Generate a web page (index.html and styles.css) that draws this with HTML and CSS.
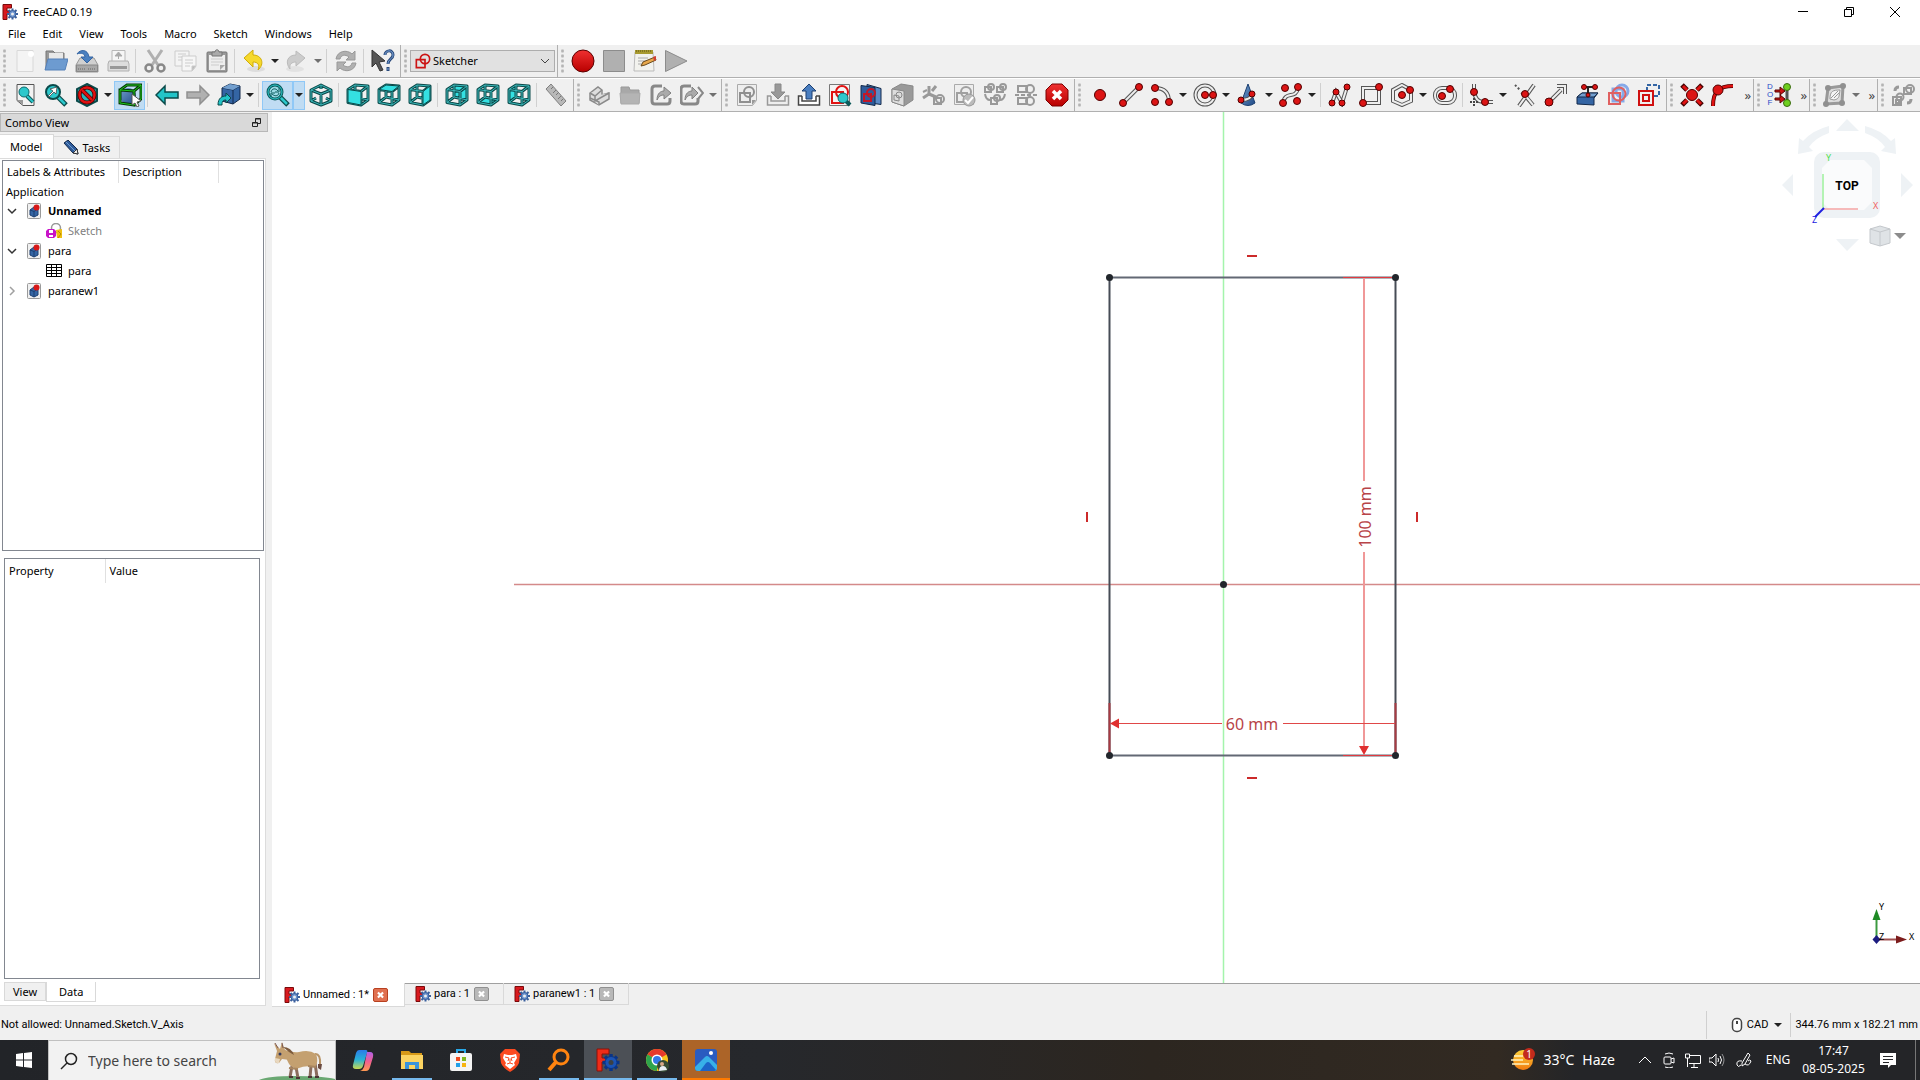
FILE: index.html
```html
<!DOCTYPE html>
<html lang="en">
<head>
    <meta charset="UTF-8">
    <meta name="viewport" content="width=device-width, initial-scale=1.0">
    <title>FreeCAD 0.19</title>
    <link rel="stylesheet" href="styles.css">
</head>
<body>
    <!-- shared shapes -->
    <svg class="defs" aria-hidden="true">
        <defs>
            <linearGradient id="gBlue" x1="0" y1="0" x2="1" y2="1"><stop offset="0" stop-color="#729fcf"/><stop offset="1" stop-color="#204a87"/></linearGradient>
            <linearGradient id="gRed" x1="0" y1="0" x2="0" y2="1"><stop offset="0" stop-color="#f03030"/><stop offset="1" stop-color="#b80000"/></linearGradient>
            <linearGradient id="gSun" x1="0" y1="0" x2="0" y2="1"><stop offset="0" stop-color="#ffd23a"/><stop offset="1" stop-color="#f07a10"/></linearGradient>
            <linearGradient id="gCopA" x1="0" y1="0" x2="0" y2="1"><stop offset="0" stop-color="#2a7be8"/><stop offset=".5" stop-color="#28b0d8"/><stop offset="1" stop-color="#c8d850"/></linearGradient>
            <linearGradient id="gCopB" x1="0" y1="0" x2="0" y2="1"><stop offset="0" stop-color="#b060e8"/><stop offset=".5" stop-color="#f06090"/><stop offset="1" stop-color="#ff9a50"/></linearGradient>
            <symbol id="logo" viewBox="0 0 16 16">
                <path d="M1 .5h8.500V4H5v3h3v3H5v5.500H1z" fill="#d81a1f" stroke="#7a0a0a"/>
                <path d="M10.500 4.500v11M5 10h11M6.500 6l8 8M14.500 6l-8 8" stroke="#3a5f9c" stroke-width="2"/>
                <circle cx="10.500" cy="10" r="3.500" fill="#6a92cc" stroke="#3a5f9c"/>
                <circle cx="10.500" cy="10" r="1.500" fill="#eee"/>
            </symbol>
            <symbol id="doc" viewBox="0 0 16 16">
                <rect x="1.500" y=".5" width="13" height="15" rx="1" fill="#f0f0f0" stroke="#9a9a9a"/>
                <path d="M4 7l4-3 4 2v6l-4 2-4-2z" fill="#3465a4" stroke="#1c3f70"/>
                <path d="M4 7l4 1.500L12 6M8 8.500V14" stroke="#1c3f70" fill="none"/>
                <circle cx="10.500" cy="4.500" r="3" fill="#d81818"/>
            </symbol>
            <symbol id="wire" viewBox="0 0 24 24">
                <g fill="none" stroke-linejoin="round">
                    <path class="teal-edge" d="M2 6.500l13 2V22L2 19.500zM2 6.500L9 2l13 1-7 5.500M22 3v14l-7 5M9 2v12l13 3M9 14l-7 5.500"/>
                    <path class="teal-core" d="M2 6.500l13 2V22L2 19.500zM2 6.500L9 2l13 1-7 5.500M22 3v14l-7 5M9 2v12l13 3M9 14l-7 5.500"/>
                </g>
            </symbol>
            <symbol id="sketch" viewBox="0 0 24 24">
                <g fill="none" stroke-width="2.500"><path d="M2 10h13v12H2z"/><circle cx="15" cy="9" r="7"/></g>
            </symbol>
            <symbol id="close" viewBox="0 0 14 14">
                <path d="M4 4l6 6M10 4l-6 6" stroke="#fff" stroke-width="2.500"/>
            </symbol>
        </defs>
    </svg>

    <header class="titlebar">
        <svg class="i16"><use href="#logo"/></svg>
        <span class="title">FreeCAD 0.19</span>
        <div class="window-buttons">
            <button aria-label="Minimize"><svg viewBox="0 0 12 12"><path d="M1 5.500h10"/></svg></button>
            <button aria-label="Restore"><svg viewBox="0 0 12 12"><path d="M1.500 3.500h7v7h-7zM3.500 3.500v-2h7v7h-2"/></svg></button>
            <button aria-label="Close"><svg viewBox="0 0 12 12"><path d="M1 1l10 10M11 1L1 11"/></svg></button>
        </div>
    </header>

    <nav class="menubar">
        <button>File</button><button>Edit</button><button>View</button><button>Tools</button><button>Macro</button><button>Sketch</button><button>Windows</button><button>Help</button>
    </nav>

    <div class="toolrow">
        <div class="toolbar">
            <i class="grip"></i>
            <button aria-label="New"><svg viewBox="0 0 24 24"><path d="M4 1.500h16v21H4z" fill="#f4f4f4" stroke="#d8d8d8"/><circle cx="18" cy="5" r="3" fill="#fff"/></svg></button>
            <button aria-label="Open"><svg viewBox="0 0 24 24"><path d="M2 20V2h7l2 2h9v6" fill="#999" stroke="#777"/><path d="M5 4h14v6H5z" fill="#e8e8e8"/><path d="M4 10h20l-3 11H1z" fill="#6d9bd0" stroke="#5580b8"/></svg></button>
            <button aria-label="Save"><svg viewBox="0 0 24 24"><path d="M5 9h14l4 7v7H1v-7z" fill="#d0d0d0" stroke="#999"/><path d="M1.500 16h21v6.500h-21z" fill="#a8a8a8" stroke="#888"/><path d="M3 20h8M13 20h8" stroke="#666" stroke-dasharray="1 1"/><path d="M2 5c3-5 11-5 12 3h4l-6 6-6-6h4c0-3-4-5-8-3z" fill="#4a80c0" stroke="#3465a4"/></svg></button>
            <button aria-label="Print"><svg viewBox="0 0 24 24"><path d="M6 1.500h13V14H6z" fill="#f6f6f6" stroke="#b8b8b8"/><path d="M12.500 10V6M9 7l3.500-4L16 7z" fill="#aaa" stroke="#aaa"/><path d="M3 12h19l1 3v7H2v-7z" fill="#ddd" stroke="#b0b0b0"/><path d="M4 17h17v3H4z" fill="#999"/></svg></button>
            <i class="sep"></i>
            <button aria-label="Cut"><svg viewBox="0 0 24 24" fill="none"><path d="M5 1l10 15M19 1L9 16" stroke="#b0b0b0" stroke-width="3"/><circle cx="6" cy="19" r="3.500" stroke="#888" stroke-width="2.500"/><circle cx="18" cy="19" r="3.500" stroke="#888" stroke-width="2.500"/></svg></button>
            <button aria-label="Copy"><svg viewBox="0 0 24 24" stroke="#ccc"><path d="M1 2h14v15H1z" fill="#f4f4f4"/><path d="M4 5h8M4 8h8M4 11h5"/><path d="M8 7h14v10l-4 5H8z" fill="#f6f6f6"/><path d="M11 11h8M11 14h8M11 17h5"/><path d="M18 22v-5h4z" fill="#bbb"/></svg></button>
            <button aria-label="Paste"><svg viewBox="0 0 24 24"><rect x="2" y="3" width="20" height="20" rx="1" fill="#999" stroke="#777"/><path d="M4 6h16v15H4z" fill="#eee"/><path d="M7 7V3h3c0-3 4-3 4 0h3v4z" fill="#aaa" stroke="#777"/><path d="M6 10h12M6 13h12M6 16h8" stroke="#ccc"/><path d="M15 21v-5h5z" fill="#aaa"/></svg></button>
            <i class="sep"></i>
            <button aria-label="Undo"><svg viewBox="0 0 24 24"><ellipse cx="14" cy="20" rx="9" ry="3" fill="#ddd"/><path d="M2 9l9-8v5c9 0 12 9 5 15 2-5 0-8-5-8v5z" fill="#f6d92c" stroke="#d0ac08"/></svg></button>
            <button class="drop" aria-label="Undo list"></button>
            <button aria-label="Redo"><svg viewBox="0 0 24 24"><ellipse cx="10" cy="20" rx="9" ry="3" fill="#e2e2e2"/><path d="M20 9l-9-7v4c-9 0-11 8-6 14-1-5 2-7 6-7v4z" fill="#ccc" stroke="#bbb"/></svg></button>
            <button class="drop off" aria-label="Redo list"></button>
            <i class="sep"></i>
            <button aria-label="Refresh"><svg viewBox="0 0 24 24" fill="#b0b0b0" stroke="#999"><path d="M2 10c1-8 11-10 16-5l3-3v9h-9l3-3c-4-3-8-2-9 2z"/><path d="M22 14c-1 8-11 10-16 5l-3 3v-9h9l-3 3c4 3 8 2 9-2z"/></svg></button>
            <i class="sep"></i>
            <button aria-label="What's this"><svg viewBox="0 0 24 24"><path d="M1 1l13 11-6 1 4 8-3 1-4-8-4 4z" fill="#555" stroke="#333"/><path d="M14 6c0-5 8-6 8 0 0 4-5 4-5 9M17 18v4" fill="none" stroke="#2a4a7c" stroke-width="3"/><path d="M14 6c0-5 8-6 8 0 0 4-5 4-5 9M17 19v2" fill="none" stroke="#7aa4d8"/></svg></button>
        </div>
        <div class="toolbar">
            <i class="grip"></i>
            <label class="workbench">
                <svg class="i16" stroke="#cc1414"><use href="#sketch"/></svg>
                <select aria-label="Workbench"><option>Sketcher</option></select>
                <svg class="chev" viewBox="0 0 10 6"><path d="M1 1l4 4 4-4" fill="none" stroke="#444"/></svg>
            </label>
        </div>
        <div class="toolbar last">
            <i class="grip"></i>
            <button aria-label="Record macro"><svg viewBox="0 0 24 24"><circle cx="12" cy="12" r="11" fill="url(#gRed)" stroke="#5a0000"/></svg></button>
            <button aria-label="Stop macro"><svg viewBox="0 0 24 24"><path d="M1.500 1.500h21v21h-21z" fill="#b0b0b0" stroke="#8c8c8c"/></svg></button>
            <button aria-label="Macros"><svg viewBox="0 0 24 24"><path d="M2 3h18l1 19H1z" fill="#f2f2ee" stroke="#bbb"/><path d="M2 1h18v4H2z" fill="#a89a30"/><path d="M3 2h16" stroke="#5a5010" stroke-dasharray="1 1"/><path d="M5 9h10M5 12h8M5 15h6" stroke="#aaa"/><path d="M8 17l2-4 12-5 1 3-11 5z" fill="#e8a84c" stroke="#6a4a1c"/><path d="M20 8l3-1v4l-2 1z" fill="#d04030"/></svg></button>
            <button aria-label="Execute macro"><svg viewBox="0 0 24 24"><path d="M1.500 1.500L23 12 1.500 22.500z" fill="#b0b0b0" stroke="#8c8c8c"/></svg></button>
        </div>
    </div>

    <div class="toolrow">
        <div class="toolbar">
            <i class="grip"></i>
            <button aria-label="Fit all"><svg viewBox="0 0 24 24"><path d="M4 1.500h17v21H10l-6-5z" fill="#f2f2f2" stroke="#555"/><path d="M4 17h6v5z" fill="#999"/><path d="M14 13l6 6" stroke="#0b5a5a" stroke-width="4"/><path d="M14 13l6 6" stroke="#2cc8cc" stroke-width="2"/><circle cx="11" cy="9" r="5" fill="#2cc8cc" stroke="#0b6a6c"/></svg></button>
            <button aria-label="Fit selection"><svg viewBox="0 0 24 24"><path d="M13 13l9 9" stroke="#0b4a4a" stroke-width="5"/><path d="M13 13l8 8" stroke="#2cc8cc" stroke-width="2.500"/><circle cx="9" cy="9" r="7" fill="#2cc8cc" stroke="#0b4a4a" stroke-width="2"/><path d="M4 13l5-5-3-2 7-2-1 7-2-2-5 5z" fill="#fff" stroke="#333" stroke-width=".7"/></svg></button>
            <button aria-label="Draw style"><svg viewBox="0 0 24 24" fill="none"><path d="M12 1l10 5v12l-10 5-10-5V6z" fill="#2ab4b8" stroke="#0b4a4a" stroke-width="2"/><circle cx="12" cy="12" r="7.500" stroke="#400" stroke-width="4"/><circle cx="12" cy="12" r="7.500" stroke="#e01212" stroke-width="2.500"/><path d="M7 7l10 10" stroke="#400" stroke-width="4"/><path d="M7 7l10 10" stroke="#e01212" stroke-width="2.500"/></svg></button>
            <button class="drop" aria-label="Draw style list"></button>
            <button class="on" aria-label="Bounding box"><svg viewBox="0 0 24 24"><circle cx="10" cy="13" r="8" fill="url(#gBlue)"/><path d="M2 7l14 1v14L2 20zM2 7l7-5h14l-7 6M23 2v14l-7 6" fill="none" stroke="#063806" stroke-width="3"/><path d="M2 7l14 1v14L2 20zM2 7l7-5h14l-7 6M23 2v14l-7 6" fill="none" stroke="#1ec81e"/><path d="M14 11l9 7-4 1 2 4-2 1-2-4-3 2z" fill="#fff" stroke="#555"/></svg></button>
            <i class="sep"></i>
            <button aria-label="Back"><svg viewBox="0 0 24 24"><path d="M1 12l9-9v6h13v6H10v6z" fill="#22c4c8" stroke="#0b4a4a" stroke-width="1.500"/></svg></button>
            <button aria-label="Forward"><svg viewBox="0 0 24 24"><path d="M23 12l-9-9v6H1v6h13v6z" fill="#b0b0b0" stroke="#909090" stroke-width="1.500"/></svg></button>
            <button aria-label="Go to linked object"><svg viewBox="0 0 24 24"><path d="M5 5l8-4 10 2v13l-7 5-11-3z" fill="#3465a4" stroke="#12294a"/><path d="M5 5l11 2 7-4M16 7v14" fill="none" stroke="#12294a"/><path d="M5 5l8-4 10 2-7 4z" fill="#729fcf"/><path d="M1 22c0-7 4-9 8-9v-3l5 5-5 5v-3c-3 0-4 1-4 5z" fill="#22c4c8" stroke="#0b4a4a"/></svg></button>
            <button class="drop" aria-label="Link list"></button>
            <i class="sep"></i>
            <button class="on" aria-label="Sync view"><svg viewBox="0 0 24 24" fill="none"><path d="M14 14l8 8" stroke="#0b4a4a" stroke-width="5"/><path d="M14 14l7 7" stroke="#2cc8cc" stroke-width="2.500"/><circle cx="9" cy="9" r="7" fill="#9cdce6" stroke="#0b5a5c" stroke-width="3"/><circle cx="9" cy="9" r="7" stroke="#2cc8cc"/><path d="M5 9c1-4 5-4 7-1M13 10c-1 4-5 3-7 1M13 5v4H9M5 14v-4h4" stroke="#0b5a5c"/></svg></button>
            <button class="drop on" aria-label="Sync view list"></button>
            <button aria-label="Isometric"><svg viewBox="0 0 24 24" fill="none" stroke-linejoin="round"><path class="teal-edge" d="M12 2l10 5v11l-10 4-10-4V7zM2 7l10 4 10-4M12 11v11M12 2v4M2 18l5-3M22 18l-5-3"/><path class="teal-core" d="M12 2l10 5v11l-10 4-10-4V7zM2 7l10 4 10-4M12 11v11M12 2v4M2 18l5-3M22 18l-5-3"/></svg></button>
            <i class="sep"></i>
            <button aria-label="Front"><svg viewBox="0 0 24 24"><use href="#wire"/><path class="face" d="M2 6.500l13 2V22L2 19.500z"/></svg></button>
            <button aria-label="Top"><svg viewBox="0 0 24 24"><use href="#wire"/><path class="face" d="M2 6.500L9 2l13 1-7 5.500z"/></svg></button>
            <button aria-label="Right"><svg viewBox="0 0 24 24"><use href="#wire"/><path class="face" d="M15 8.500L22 3v14l-7 5z"/></svg></button>
            <i class="sep"></i>
            <button aria-label="Rear"><svg viewBox="0 0 24 24"><path class="face" d="M9 2l13 1v14L9 14z"/><use href="#wire"/></svg></button>
            <button aria-label="Bottom"><svg viewBox="0 0 24 24"><path class="face" d="M2 19.500L9 14l13 3-7 5z"/><use href="#wire"/></svg></button>
            <button aria-label="Left"><svg viewBox="0 0 24 24"><path class="face" d="M2 6.500L9 2v12l-7 5.500z"/><use href="#wire"/></svg></button>
            <i class="sep"></i>
            <button aria-label="Measure"><svg viewBox="0 0 24 24"><path d="M2 6l5-5 15 17-5 5z" fill="#b8b8b8" stroke="#808080"/><path d="M9 4L7 6M12 7l-3 3M14 10l-2 2M17 13l-3 3M19 16l-2 2" stroke="#777"/></svg></button>
        </div>
        <div class="toolbar">
            <i class="grip"></i>
            <button aria-label="Create part"><svg viewBox="0 0 24 24" fill="#ddd" stroke="#8a8a8a" stroke-width="1.500"><path d="M3 10l8-6 4 3v5l7-2v6l-10 6-9-5z"/><path d="M3 10l5 3 7-6M8 13v5l14-8M3 15l9 4v3"/></svg></button>
            <button aria-label="Create group"><svg viewBox="0 0 24 24"><path d="M3 20V4h8l1 3h9v13z" fill="#a8a8a8" stroke="#999"/><path d="M2 10h20l-1 11H3z" fill="#b4b4b4" stroke="#aaa"/></svg></button>
            <button aria-label="Make link"><svg viewBox="0 0 24 24" fill="none"><path d="M13 3H6q-3 0-3 3v12q0 3 3 3h12q3 0 3-3v-3" stroke="#888" stroke-width="3"/><path d="M8 17c0-7 4-9 7-9V4l7 6-7 6v-4c-3 0-5 1-7 5z" fill="#aaa" stroke="#808080"/></svg></button>
            <button aria-label="Make sub-link"><svg viewBox="0 0 24 24" fill="none"><path d="M11 3H4Q1 3 1 6v12q0 3 3 3h11q3 0 3-3v-3" stroke="#888" stroke-width="3"/><path d="M5 17c0-7 4-9 7-9V4l6 6-6 6v-4c-3 0-5 1-7 5z" fill="#aaa" stroke="#808080"/><path d="M18 4l5 6-5 6" stroke="#888" stroke-width="2"/></svg></button>
            <button class="drop off" aria-label="Link actions"></button>
        </div>
        <div class="toolbar">
            <i class="grip"></i>
            <button aria-label="Create sketch"><svg viewBox="0 0 24 24"><path d="M2.500 1.500h19v16l-4 5h-15z" fill="#eee" stroke="#aaa"/><g fill="none" stroke="#909090" stroke-width="2"><path d="M5 10h10v9H5z"/><circle cx="14" cy="9" r="5"/></g><path d="M17 22v-5h4z" fill="#999"/></svg></button>
            <button aria-label="Edit sketch"><svg viewBox="0 0 24 24"><path d="M5 13H1.500v9h21v-9H19M5 13v5h14v-5" fill="#eee" stroke="#999" stroke-width="1.500"/><path d="M9 1h6v8h4l-7 7-7-7h4z" fill="#999" stroke="#888"/></svg></button>
            <button aria-label="Leave sketch"><svg viewBox="0 0 24 24"><path d="M5 13H1.500v9h21v-9H19M5 13v5h14v-5" fill="#fff" stroke="#444" stroke-width="1.500"/><path d="M9 16h6V8h4l-7-7-7 7h4z" fill="#4a7ec0" stroke="#1c3f70"/></svg></button>
            <button aria-label="View sketch"><svg viewBox="0 0 24 24"><path d="M1.500 1.500h20v21h-20z" fill="#f4f4f4" stroke="#777"/><g fill="none" stroke="#e01212" stroke-width="2"><path d="M4 9h11v11H4z"/><circle cx="14" cy="9" r="6"/></g><path d="M17 17l5 5" stroke="#0b5a5a" stroke-width="4"/><circle cx="15" cy="15" r="5" fill="#2cc8cc" stroke="#0b6a6c"/></svg></button>
            <button aria-label="View section"><svg viewBox="0 0 24 24"><path d="M8 1.500l14 4v16l-14-2z" fill="#5b8ac6" stroke="#12294a"/><path d="M2 2.500l14 2v18L2 20z" fill="#2f5c9c" stroke="#12294a"/><g fill="none" stroke="#c01828" stroke-width="2"><path d="M5 11h7v7H5z"/><circle cx="12" cy="10" r="4"/></g></svg></button>
            <button aria-label="Map sketch"><svg viewBox="0 0 24 24" stroke="#888"><path d="M2 6l9-5 12 2v14l-9 6-12-4z" fill="#999"/><path d="M2 6l12 2v15L2 19z" fill="#ddd"/><g fill="none"><path d="M4 12l5 1v5l-5-1z"/><circle cx="9" cy="12" r="3"/></g></svg></button>
            <button aria-label="Reorient sketch"><svg viewBox="0 0 24 24" fill="none" stroke="#999" stroke-width="3"><path d="M8 3v8l-6 4M8 11l7 3M11 8l4-5"/><path d="M2 9l4-2" stroke-width="2"/><path d="M13 15h7v6h-7z" stroke-width="2"/><circle cx="19" cy="16" r="4" stroke-width="2"/></svg></button>
            <button aria-label="Validate sketch"><svg viewBox="0 0 24 24"><path d="M2.500 1.500h19v20h-19z" fill="#eee" stroke="#aaa"/><g fill="none" stroke="#a0a0a0" stroke-width="2"><path d="M5 10h10v9H5z"/><circle cx="14" cy="9" r="5"/></g><circle cx="17" cy="17" r="6" fill="#bbb" stroke="#999"/><path d="M13 17l3 3 5-6" fill="none" stroke="#fff" stroke-width="2"/></svg></button>
            <button aria-label="Merge sketches"><svg viewBox="0 0 24 24" fill="none" stroke="#999" stroke-width="2"><path d="M2 4h6v5H2zM14 4h6v5h-6zM8 15h6v6H8z"/><circle cx="8" cy="4" r="3"/><circle cx="20" cy="4" r="3"/><circle cx="14" cy="15" r="3"/><path d="M2 11q1 6 5 6M22 11q-1 6-5 6"/></svg></button>
            <button aria-label="Mirror sketch"><svg viewBox="0 0 24 24" fill="none" stroke="#999" stroke-width="2"><path d="M4 3h9v6H4zM4 15h9v6H4z"/><circle cx="16" cy="6" r="4"/><circle cx="16" cy="18" r="4"/><path d="M1 12h22" stroke-dasharray="4 2"/></svg></button>
            <button aria-label="Stop operation"><svg viewBox="0 0 24 24"><path d="M7 1h10l6 6v10l-6 6H7l-6-6V7z" fill="url(#gRed)" stroke="#7a0000"/><path d="M8 8l8 8M16 8l-8 8" stroke="#fff" stroke-width="3.500"/></svg></button>
        </div>
        <div class="toolbar">
            <i class="grip"></i>
            <button aria-label="Point"><svg viewBox="0 0 24 24"><circle class="dot" cx="12" cy="12" r="5.500"/></svg></button>
            <button aria-label="Line"><svg viewBox="0 0 24 24" fill="none"><path class="tube" d="M4 20L20 4"/><path class="hollow" d="M4 20L20 4"/><circle class="dot" cx="4" cy="20" r="3.500"/><circle class="dot" cx="20" cy="4" r="3.500"/></svg></button>
            <button aria-label="Arc"><svg viewBox="0 0 24 24" fill="none"><path class="tube" d="M5 5q14 0 14 14"/><path class="hollow" d="M5 5q14 0 14 14"/><circle class="dot" cx="5" cy="5" r="3.500"/><circle class="dot" cx="5" cy="19" r="3.500"/><circle class="dot" cx="19" cy="19" r="3.500"/></svg></button>
            <button class="drop" aria-label="Arc list"></button>
            <button aria-label="Circle"><svg viewBox="0 0 24 24" fill="none"><circle class="tube" cx="12" cy="12" r="9.500"/><circle class="hollow" cx="12" cy="12" r="9.500"/><circle class="dot" cx="12" cy="12" r="3.500"/><circle class="dot" cx="20" cy="12" r="3.500"/></svg></button>
            <button class="drop" aria-label="Circle list"></button>
            <button aria-label="Conic"><svg viewBox="0 0 24 24" fill="none"><path d="M12 1l7 19q-7 5-14 0z" fill="url(#gBlue)" stroke="#1c3f70"/><path class="tube" d="M5 17q10 0 11-6"/><path class="hollow" d="M5 17q10 0 11-6"/><circle class="dot" cx="5" cy="17" r="3"/><circle class="dot" cx="16" cy="11" r="3"/></svg></button>
            <button class="drop" aria-label="Conic list"></button>
            <button aria-label="B-spline"><svg viewBox="0 0 24 24" fill="none"><path class="tube" d="M4 20c2-13 13-3 15-15"/><path class="hollow" d="M4 20c2-13 13-3 15-15"/><circle class="dot" cx="4" cy="20" r="3.500"/><circle class="dot" cx="6" cy="5" r="3.500"/><circle class="dot" cx="19" cy="4" r="3.500"/><circle class="dot" cx="18" cy="18" r="3.500"/></svg></button>
            <button class="drop" aria-label="B-spline list"></button>
            <i class="sep"></i>
            <button aria-label="Polyline"><svg viewBox="0 0 24 24" fill="none"><path class="tube" d="M4 20l4-11 6 11 5-16"/><path class="hollow" d="M4 20l4-11 6 11 5-16"/><circle class="dot" cx="4" cy="20" r="3"/><circle class="dot" cx="8" cy="9" r="3"/><circle class="dot" cx="14" cy="20" r="3"/><circle class="dot" cx="19" cy="4" r="3"/></svg></button>
            <button aria-label="Rectangle"><svg viewBox="0 0 24 24" fill="none"><path class="tube" d="M4 5h16v15H4z"/><path class="hollow" d="M4 5h16v15H4z"/><circle class="dot" cx="4" cy="20" r="3.500"/><circle class="dot" cx="20" cy="4" r="3.500"/></svg></button>
            <button aria-label="Polygon"><svg viewBox="0 0 24 24" fill="none"><path class="tube" d="M12 2l9 5v11l-9 4-9-4V7z"/><path class="hollow" d="M12 2l9 5v11l-9 4-9-4V7z"/><circle class="dot" cx="12" cy="12" r="3.500"/><circle class="dot" cx="20" cy="7" r="3.500"/></svg></button>
            <button class="drop" aria-label="Polygon list"></button>
            <button aria-label="Slot"><svg viewBox="0 0 24 24" fill="none"><rect class="tube" x="2" y="5" width="20" height="15" rx="7"/><rect class="hollow" x="2" y="5" width="20" height="15" rx="7"/><circle class="dot" cx="9" cy="13" r="3.500"/><circle class="dot" cx="17" cy="6" r="3.500"/></svg></button>
            <i class="sep"></i>
            <button aria-label="Fillet"><svg viewBox="0 0 24 24" fill="none"><path class="tube" d="M4 1v8q2 10 9 10h10"/><path class="hollow" d="M4 1v8q2 10 9 10h10"/><path d="M4 15v8M0 19h8" stroke="#444" stroke-width="2" stroke-dasharray="2 1"/><circle class="dot" cx="4" cy="9" r="3.500"/><circle class="dot" cx="15" cy="19" r="3.500"/></svg></button>
            <button class="drop" aria-label="Fillet list"></button>
            <button aria-label="Trim"><svg viewBox="0 0 24 24" fill="none"><path class="tube" d="M6 23L21 2M9 9l11 13"/><path d="M2 2l5 5" stroke="#555" stroke-width="2" stroke-dasharray="2 2"/><path class="hollow" d="M6 23L21 2M11 11l9 11"/><circle class="dot" cx="12" cy="11" r="3.500"/></svg></button>
            <button aria-label="Extend"><svg viewBox="0 0 24 24" fill="none"><path class="tube" d="M5 19L17 7M13 3h8v8"/><path class="hollow" d="M5 19L17 7M13 3h8v8"/><circle class="dot" cx="5" cy="19" r="4"/></svg></button>
            <button aria-label="External geometry"><svg viewBox="0 0 24 24"><path d="M2 14l5-4h16l-4 5v7l-17-1z" fill="#3465a4" stroke="#12294a"/><path d="M2 14l5-4h16l-4 4z" fill="#729fcf" stroke="#12294a"/><path d="M9 4h10M13 4v8" stroke="#222" stroke-width="2"/><circle class="dot" cx="9" cy="4" r="2.500"/><circle class="dot" cx="20" cy="4" r="2.500"/><circle class="dot" cx="13" cy="12" r="2"/></svg></button>
            <button aria-label="Carbon copy"><svg viewBox="0 0 24 24" fill="none"><g stroke="#85a9e8" stroke-width="3"><path d="M7 6h10v12H7z"/><circle cx="16" cy="8" r="6"/></g><g stroke="#e06060" stroke-width="2"><path d="M3 10h11v11H3z"/><circle cx="13" cy="11" r="6.500"/></g></svg></button>
            <button aria-label="Toggle construction"><svg viewBox="0 0 24 24" fill="none"><path d="M10 8V2h12v11h-6" stroke="#3465a4" stroke-width="2" stroke-dasharray="4 2"/><path d="M2 8h14v14H2zM6 12h6v6H6z" stroke="#d01010" stroke-width="2"/></svg></button>
        </div>
        <div class="toolbar">
            <i class="grip"></i>
            <button aria-label="Coincident"><svg viewBox="0 0 24 24"><path d="M2 2l5 5M22 2l-5 5M2 22l5-5M22 22l-5-5" stroke="#400" stroke-width="5"/><path d="M3 3l4 4M21 3l-4 4M3 21l4-4M21 21l-4-4" stroke="#e01212" stroke-width="3"/><circle class="dot" cx="12" cy="12" r="5.500"/></svg></button>
            <button aria-label="Point on object"><svg viewBox="0 0 24 24" fill="none"><path d="M2 23C2 8 8 3 22 3" stroke="#500" stroke-width="4"/><path d="M2 23C2 8 8 3 22 3" stroke="#e01212" stroke-width="2.500"/><circle class="dot" cx="7" cy="7" r="5"/></svg></button>
            <button class="more" aria-label="More constraints">»</button>
        </div>
        <div class="toolbar">
            <i class="grip"></i>
            <button aria-label="Select DoF"><span class="dof"><span>D</span><span>O</span><span>F</span></span><svg class="dof-icon" viewBox="7 0 17 24"><path d="M20 4v16" stroke="#555" stroke-width="3"/><path d="M8 7h5V4l5 4-5 4V9H8zM8 15h5v-3l5 4-5 4v-3H8z" fill="#d01414" stroke="#500"/><circle cx="20" cy="4" r="3.500" fill="#6fcf1f" stroke="#3a6a10"/><circle cx="20" cy="20" r="3.500" fill="#6fcf1f" stroke="#3a6a10"/></svg></button>
            <button class="more" aria-label="More tools">»</button>
        </div>
        <div class="toolbar">
            <i class="grip"></i>
            <button aria-label="Show B-spline info"><svg viewBox="0 0 24 24"><path d="M5 5l15-2-1 17-16 1z" fill="#ddd" stroke="#999" stroke-width="3"/><path d="M7 16c0-8 3-9 10-9-1 5 0 9-6 10z" fill="#f4f4f4" stroke="#999"/><path d="M8 15l7-7M11 15l5-5" stroke="#999"/><g fill="#909090"><circle cx="5" cy="5" r="3"/><circle cx="20" cy="3" r="3"/><circle cx="19" cy="20" r="3"/><circle cx="3" cy="21" r="3"/></g></svg></button>
            <button class="drop off" aria-label="B-spline info list"></button>
            <button class="more" aria-label="More B-spline tools">»</button>
        </div>
        <div class="toolbar last">
            <i class="grip"></i>
            <button aria-label="Switch virtual space"><svg viewBox="0 0 24 24" fill="none" stroke="#999" stroke-width="2"><path d="M2 14h8v8H2zM5 17h3v3H5zM13 5h7v6h-7z"/><circle cx="9" cy="14" r="3.500"/><circle cx="19" cy="6" r="4"/><path d="M4 8q0-4 4-4M20 16q0 4-4 4" stroke-width="3"/></svg></button>
        </div>
    </div>

    <main class="workspace">
        <aside class="dock">
            <div class="dock-title"><span>Combo View</span><button aria-label="Float"><svg viewBox="0 0 9 9"><path d="M.5 4.500h5v4h-5zM3.500 4V.5h5v5H6M.5 5h5M3.500 1h5" fill="none" stroke="#222"/></svg></button></div>
            <div class="tabs top-tabs">
                <button class="active">Model</button>
                <button><svg class="i16" viewBox="0 0 16 16"><path d="M1 3l4-3 9 9 1 5-5-1z" fill="#2f5c9c" stroke="#12294a"/><path d="M3 2l9 9" stroke="#729fcf"/><path d="M10 13l4-4 1 5z" fill="#eee" stroke="#333"/></svg>Tasks</button>
            </div>
            <div class="dock-page">
                <div class="tree-frame">
                    <table class="tree">
                        <thead><tr><th>Labels &amp; Attributes</th><th>Description</th><th></th></tr></thead>
                        <tbody>
                            <tr class="root"><td colspan="3">Application</td></tr>
                            <tr><td colspan="3"><div class="node"><svg class="fold" viewBox="0 0 10 10"><path d="M1 3l4 4 4-4"/></svg><svg class="i16"><use href="#doc"/></svg><b>Unnamed</b></div></td></tr>
                            <tr><td colspan="3"><div class="node child off"><svg class="i16" viewBox="0 0 16 16"><circle cx="10" cy="5" r="4.500" fill="none" stroke="#999" stroke-width="1.500"/><path d="M10 7l6-1v9h-5z" fill="#f0c010"/><path d="M12 8l3 3-3 4" fill="none" stroke="#b88c00"/><path d="M2 6h6l2 2v5l-2 2H2l-2-2V8z" fill="#c814c8"/><path d="M3 7h4v3H3zM3 12h4v2H3z" fill="#fff"/></svg>Sketch</div></td></tr>
                            <tr><td colspan="3"><div class="node"><svg class="fold" viewBox="0 0 10 10"><path d="M1 3l4 4 4-4"/></svg><svg class="i16"><use href="#doc"/></svg>para</div></td></tr>
                            <tr><td colspan="3"><div class="node child"><svg class="i16" viewBox="0 0 16 16"><path d="M.5 1.500h15v12H.5zM.5 4.500h15M.5 7.500h15M.5 10.500h15M5.500 1v12M10.500 1v12" fill="#fff" stroke="#000"/></svg>para</div></td></tr>
                            <tr><td colspan="3"><div class="node"><svg class="fold shut" viewBox="0 0 10 10"><path d="M3 1l4 4-4 4"/></svg><svg class="i16"><use href="#doc"/></svg>paranew1</div></td></tr>
                        </tbody>
                    </table>
                </div>
                <div class="prop-frame">
                    <table class="props"><thead><tr><th>Property</th><th>Value</th></tr></thead></table>
                </div>
                <div class="tabs bottom-tabs">
                    <button>View</button>
                    <button class="active">Data</button>
                </div>
            </div>
        </aside>

        <section class="mdi">
            <div class="viewport">
                <svg class="scene" viewBox="0 0 1648 871">
                    <path d="M242 472.500h1406" stroke="#d48a8a" stroke-width="1.500"/>
                    <path d="M951.500 0v871" stroke="#a4f4ac" stroke-width="1.500"/>
                    <g stroke-width="2">
                        <path d="M837.500 165.500h286M837.500 643.500h286" stroke="#626874"/>
                        <path d="M837.500 165.500v478M1123.500 165.500v478" stroke="#474c56"/>
                        <path d="M837.500 591v52M1123.500 591v52" stroke="#a83a42"/>
                    </g>
                    <path d="M1071 165.500h52M1071 643.500h52" stroke="#e03a40"/>
                    <path d="M1092 166v203M1092 440v196" stroke="#f09898" stroke-width="2"/>
                    <path d="M846 611.500h104M1011 611.500h112" stroke="#e04848"/>
                    <path d="M838 611.500l9-5v10zM1092 643l-5-9h10z" fill="#e03030"/>
                    <g fill="#22262c">
                        <circle cx="837.500" cy="165.500" r="3.500"/><circle cx="1123.500" cy="165.500" r="3.500"/>
                        <circle cx="837.500" cy="643.500" r="3.500"/><circle cx="1123.500" cy="643.500" r="3.500"/>
                        <circle cx="951.500" cy="472.500" r="3.500"/>
                    </g>
                    <path d="M975 144h10M975 666h10M815 400v10M1145 400v10" stroke="#cc2a2a" stroke-width="2"/>
                    <text class="dim" x="980" y="618">60 mm</text>
                    <text class="dim" transform="translate(1099 405) rotate(-90)">100 mm</text>
                </svg>

                <svg class="navcube" viewBox="0 0 160 148">
                    <g fill="#eef2f5">
                        <path d="M76 19h23L87 7zM76 127h23l-12 12zM22 73l11-11v22zM153 73l-12-12v24z"/>
                        <path d="M69 14v7q-14 5-20 14l4 4-15 3 1-16 4 3q10-11 26-15zM105 14v7q14 5 20 14l-4 4 15 3-1-16-4 3q-10-11-26-15z"/>
                        <rect x="54" y="40" width="66" height="66" rx="10"/>
                    </g>
                    <path d="M62 56l8-8h34l8 8v34l-8 8H70l-8-8z" fill="#fafbfc"/>
                    <path d="M63 62v35" stroke="#9cf09c" stroke-width="1.500"/>
                    <path d="M63 97h35" stroke="#f4a4a4" stroke-width="1.500"/>
                    <path d="M64 96l-9 9" stroke="#2020e0" stroke-width="2"/>
                    <text class="face-label" x="87" y="78">TOP</text>
                    <text class="axis" x="66" y="49" fill="#50e050">Y</text>
                    <text class="axis" x="113" y="97" fill="#f06060">X</text>
                    <text class="axis" x="52" y="111" fill="#2020e0">Z</text>
                    <path d="M110 117l10-3 10 3v14l-10 3-10-3z" fill="#dfe3e6" stroke="#c4c8cc"/>
                    <path d="M110 117l10 3 10-3M120 120v14" fill="none" stroke="#c4c8cc"/>
                    <path d="M134 121h12l-6 6z" fill="#8c8c8c"/>
                </svg>

                <svg class="axes" viewBox="0 0 80 70">
                    <path d="M36.500 49V27" stroke="#3c9a40" stroke-width="2"/>
                    <path d="M36.500 19l4 11h-8z" fill="#1e8a24"/>
                    <path d="M37 49.500h22" stroke="#a05050" stroke-width="2"/>
                    <path d="M67 49.500l-11-4v8z" fill="#7c1c1c"/>
                    <path d="M36.500 45l4 4.500-4 4.500-4-4.500z" fill="#1c1c80"/>
                    <text class="axis" x="39" y="20">Y</text>
                    <text class="axis" x="69" y="50">X</text>
                    <text class="axis" x="39" y="50">Z</text>
                </svg>
            </div>
            <div class="mdi-tabs">
                <div class="mdi-tab active"><svg class="i16"><use href="#logo"/></svg><span>Unnamed : 1*</span><button aria-label="Close Unnamed"><svg viewBox="0 0 14 14"><use href="#close"/></svg></button></div>
                <div class="mdi-tab"><svg class="i16"><use href="#logo"/></svg><span>para : 1</span><button aria-label="Close para"><svg viewBox="0 0 14 14"><use href="#close"/></svg></button></div>
                <div class="mdi-tab"><svg class="i16"><use href="#logo"/></svg><span>paranew1 : 1</span><button aria-label="Close paranew1"><svg viewBox="0 0 14 14"><use href="#close"/></svg></button></div>
            </div>
        </section>
    </main>

    <footer class="statusbar">
        <span class="message">Not allowed: Unnamed.Sketch.V_Axis</span>
        <button class="navstyle"><svg viewBox="0 0 12 16"><rect x="1.500" y="1.500" width="9" height="13" rx="4" fill="#fff" stroke="#444" stroke-width="1.500"/><path d="M6 4v3" stroke="#444" stroke-width="2"/></svg>CAD<i class="tri"></i></button>
        <span class="size">344.76 mm x 182.21 mm</span>
    </footer>

    <div class="taskbar">
        <button class="start" aria-label="Start"><svg viewBox="0 0 16 16" fill="#fff"><path d="M0 2l7-1v6.500H0zM8 1l8-1v7.500H8zM0 8.500h7V15l-7-1zM8 8.500h8V16l-8-1z"/></svg></button>
        <div class="search">
            <svg class="lens" viewBox="0 0 18 18"><circle cx="11" cy="7" r="5.500"/><path d="M7 11l-6 6"/></svg>
            <input type="text" placeholder="Type here to search" aria-label="Type here to search">
            <svg class="donkey" viewBox="0 0 80 40">
                <path d="M2 40q8-5 38-5 28 0 40 3v2z" fill="#6aa872"/>
                <path d="M37 25l-2 11M41 26l2 11" stroke="#8a6c5c" stroke-width="3"/>
                <path d="M56 25l-1 11M60 22l2 14" stroke="#8a6c5c" stroke-width="3"/>
                <path d="M60 13q6 0 5 11" fill="none" stroke="#b89468" stroke-width="2"/>
                <path d="M63 23l4 0-1 6-3-2z" fill="#6a4a40"/>
                <path d="M30 9q8 3 14 2 10-3 17 2 3 8-1 13-10-2-16 1-8 2-12-8z" fill="#c4a070"/>
                <path d="M34 27l9 1M53 25l8 1" stroke="#a88660" stroke-width="2"/>
                <path d="M19 2l6 6 2-7 3 8q6 4 5 10l-8-1-3 4q-5 1-4-4l2-8z" fill="#c4a070"/>
                <path d="M20 2l3 5M27 2l1 5" stroke="#7c5a54"/>
                <path d="M28 6q8 0 11 8l-5-3z" fill="#7c5a3c"/>
                <path d="M20 17l5 1-1 4q-5 1-4-5z" fill="#e8d8c0"/>
                <circle cx="25" cy="13" r="1.500" fill="#333a60"/>
                <path d="M34 36h4M41 37h4M53 36h4M60 36h4" stroke="#4a3434" stroke-width="2"/>
            </svg>
        </div>
        <div class="apps">
            <button aria-label="Copilot"><svg viewBox="0 0 24 24"><path d="M8 2h7q2 0 1 3l-4 13q-1 3-4 3H5q-4 0-3-4L5 5q1-3 3-3z" fill="url(#gCopA)"/><path d="M16 4h3q4 0 3 5l-3 10q-1 4-4 4H9q3-1 4-4z" fill="url(#gCopB)"/></svg></button>
            <button class="running" aria-label="File Explorer"><svg viewBox="0 0 24 24"><path d="M1 3h8l2 2h11v4H1z" fill="#d89a18"/><path d="M1 7h22v14H1z" fill="#fcd462"/><path d="M5 21v-7h14v7h-4v-4H9v4z" fill="#3a94dc"/></svg></button>
            <button aria-label="Store"><svg viewBox="0 0 24 24"><path d="M8 6V2h8v4" fill="none" stroke="#28a8e8" stroke-width="2"/><rect x="1" y="5" width="22" height="18" rx="2" fill="#f4f4f4"/><path d="M7 9h4v4H7z" fill="#f04a20"/><path d="M13 9h4v4h-4z" fill="#80b820"/><path d="M7 15h4v4H7z" fill="#20a0e8"/><path d="M13 15h4v4h-4z" fill="#f8b410"/></svg></button>
            <button aria-label="Brave"><svg viewBox="0 0 24 24"><path d="M7 1h10l5 5-1 9q-2 5-9 9-7-4-9-9L2 6z" fill="#fb4a20"/><path d="M6 6l4 1h4l4-1 1 4-3 5 1 2-5 4-5-4 1-2-3-5z" fill="#fff"/><path d="M7 9l4 1-1 3M17 9l-4 1 1 3M9 16l3-1 3 1M12 11v4" fill="none" stroke="#fb4a20"/></svg></button>
            <button class="running" aria-label="Everything"><svg viewBox="0 0 24 24" fill="none" stroke="#ff8410"><circle cx="14" cy="9" r="7" stroke-width="3"/><path d="M9 14l-7 8" stroke-width="4"/></svg></button>
            <button class="running current" aria-label="FreeCAD"><svg viewBox="0 0 24 24"><path d="M1 1h12v5H6v4h5v4H6v9H1z" fill="#f02c18" stroke="#8a1008"/><path d="M15 6v17M6.500 14.500h17M9 8.500l12 12M21 8.500l-12 12" stroke="#0a3486" stroke-width="3.500"/><circle cx="15" cy="14.500" r="6" fill="#1c54b4" stroke="#0a3486"/><circle cx="15" cy="14.500" r="2.500" fill="#3c4044"/></svg></button>
            <button class="running" aria-label="Chrome"><svg viewBox="0 0 24 24"><circle cx="12" cy="12" r="11" fill="#f8c41c"/><path d="M12 12L2.500 6.500a11 11 0 0 1 19 0z" fill="#e63a2c"/><path d="M12 12v11A11 11 0 0 1 2.500 6.500z" fill="#2ea44c"/><circle cx="12" cy="12" r="5.500" fill="#fff"/><circle cx="12" cy="12" r="4" fill="#3478e8"/><circle cx="18" cy="18" r="6" fill="#364a34"/><circle cx="17" cy="16" r="2" fill="#d8a888"/><path d="M14 23q0-5 4-5 3 0 4 4z" fill="#e8eef4"/></svg></button>
            <button class="photos" aria-label="Photos"><svg viewBox="0 0 24 24"><rect x="1" y="1" width="22" height="22" rx="3" fill="#2a5cc0"/><path d="M1 19L11 9q2-2 4 0l8 8v3q0 3-3 3H4q-3 0-3-3z" fill="#38b0e8"/><path d="M6 23l6-8q2-2 4 0l6 7q-1 1-2 1z" fill="#1c64c8"/><circle cx="17" cy="5" r="2" fill="#fff"/></svg></button>
        </div>
        <div class="tray">
            <button class="weather"><svg viewBox="0 0 24 24"><circle cx="12" cy="12" r="10" fill="url(#gSun)"/><path d="M3 8h9M0 12h12M1 16h17" stroke="#fff3c0" stroke-width="1.500"/><circle cx="18" cy="6" r="6" fill="#c42b1c"/><text x="18" y="10" class="badge">1</text></svg><span>33°C</span><span>Haze</span></button>
            <button aria-label="Show hidden icons"><svg viewBox="0 0 16 16"><path d="M2 11l6-6 6 6"/></svg></button>
            <button aria-label="Meet now"><svg viewBox="0 0 16 16"><rect x="3" y="5" width="7" height="7" rx="1"/><path d="M10 7l3-1v5l-3-1M4 2q4-2 8 0M4 15q4 2 8 0"/></svg></button>
            <button aria-label="Network"><svg viewBox="0 0 16 16"><path d="M4 3.500h11.500v8H4M9 12v3M6 15.500h7M.5 2h4v4h-4zM2.500 6v9"/></svg></button>
            <button aria-label="Volume"><svg viewBox="0 0 16 16"><path d="M0 6h3l4-4v12l-4-4H0zM9 6q1 2 0 4M11 4q3 4 0 8"/><path d="M13 2q4 6 0 12" opacity=".5"/></svg></button>
            <button class="pen" aria-label="Pen"><svg viewBox="0 0 16 16"><path d="M6 11l6-10 2 2-5 9-3 2zM6 9q-6-1-5 4 1 3 4 0M9 12q4 3 6-3-1-2-3 0"/></svg></button>
            <button class="lang">ENG</button>
            <button class="clock"><span>17:47</span><span>08-05-2025</span></button>
            <button class="notify" aria-label="Notifications"><svg viewBox="0 0 16 16"><path d="M0 1h16v12h-5l-3 3v-3H0z" fill="#fff"/><path d="M3 4.500h10M3 7.500h10M3 10.500h6" stroke="#26272a"/></svg></button>
        </div>
    </div>
</body>
</html>
```
FILE: styles.css
```css
* {
    box-sizing: border-box;
}
body {
    margin: 0;
    height: 100vh;
    display: flex;
    flex-direction: column;
    overflow: hidden;
    background: #f0f0f0;
    color: #000;
    font-family: "Noto Sans", "Open Sans", sans-serif;
    font-size: 11px;
    line-height: 16px;
}
button, select, input {
    font: inherit;
    color: inherit;
    border: 0;
    padding: 0;
    background: none;
}
svg {
    display: block;
    flex: none;
}
.defs {
    position: absolute;
    width: 0;
    height: 0;
}
.i16 {
    width: 16px;
    height: 16px;
}

/* title and menus */
.titlebar {
    display: flex;
    align-items: center;
    height: 23px;
    padding: 0 2px;
    background: #fff;
}
.title {
    margin-left: 5px;
}
.window-buttons {
    margin-left: auto;
    display: flex;
}
.window-buttons button {
    width: 46px;
    height: 22px;
    display: flex;
    align-items: center;
    justify-content: center;
}
.window-buttons svg {
    width: 12px;
    height: 12px;
    fill: none;
    stroke: #000;
}
.menubar {
    display: flex;
    gap: 1px;
    height: 21px;
    background: #fff;
}
.menubar button {
    padding: 0 8px;
}

/* toolbars */
.toolrow {
    display: flex;
    height: 34px;
    border-top: 1px solid #fff;
    border-bottom: 1px solid #b0b0b0;
}
.toolbar {
    display: flex;
    align-items: center;
    padding-right: 2px;
    border-right: 1px solid #b0b0b0;
}
.toolbar.last {
    border-right: 0;
    padding-right: 0;
}
.grip {
    width: 9px;
    height: 26px;
    background: radial-gradient(circle, #b4b4b4 1px, transparent 2px) center / 5px 5px repeat-y;
}
.sep {
    width: 1px;
    height: 24px;
    margin: 0 3px 0 2px;
    background: #d0d0d0;
}
.toolbar button {
    width: 31px;
    height: 29px;
    display: flex;
    align-items: center;
    justify-content: center;
}
.toolbar button svg {
    width: 24px;
    height: 24px;
}
.toolbar .drop {
    width: 12px;
}
.drop::before, .tri {
    content: "";
    border: 4px solid transparent;
    border-top-color: #222;
    border-bottom: 0;
}
.drop.off::before {
    border-top-color: #707070;
}
.toolbar .on {
    background: #c0dcf3;
    border: 1px solid #90c8f6;
}
.toolbar .more {
    width: 13px;
    justify-content: flex-end;
    font-size: 13px;
    color: #444;
}
.workbench {
    display: flex;
    align-items: center;
    width: 145px;
    height: 22px;
    padding: 0 4px;
    background: #e1e1e1;
    border: 1px solid #adadad;
}
.workbench select {
    flex: 1;
    margin-left: 2px;
    appearance: none;
}
.chev {
    width: 10px;
    height: 6px;
}
.teal-edge {
    stroke: #0b4a4a;
    stroke-width: 3;
}
.teal-core {
    stroke: #3cb8ba;
}
.face {
    fill: #34e0e2;
    stroke: #0b4a4a;
}
.dot {
    fill: #dc1414;
    stroke: #500000;
}
.tube {
    stroke: #555;
    stroke-width: 4;
}
.hollow {
    stroke: #eee;
    stroke-width: 2;
}
.dof {
    display: flex;
    flex-direction: column;
    width: 7px;
    font-family: "Liberation Sans", sans-serif;
    font-size: 8px;
    line-height: 8px;
    color: #2a4ac8;
}
.toolbar button .dof-icon {
    width: 17px;
}

/* combo view */
.workspace {
    flex: 1;
    min-height: 0;
    display: flex;
}
.dock {
    width: 272px;
    padding: 1px 6px 1px 0;
    display: flex;
    flex-direction: column;
}
.dock-title {
    display: flex;
    justify-content: space-between;
    align-items: center;
    height: 19px;
    margin-right: -2px;
    padding: 0 6px 0 4px;
    background: #d9d9d9;
    border: 1px solid #b8b8b8;
}
.dock-title svg {
    width: 9px;
    height: 9px;
}
.tabs {
    display: flex;
}
.tabs button {
    display: flex;
    align-items: center;
    border: 1px solid #d9d9d9;
    background: #f0f0f0;
}
.tabs .active {
    background: #fff;
}
.top-tabs {
    margin-top: 2px;
    height: 24px;
    align-items: flex-end;
}
.top-tabs button {
    height: 22px;
    padding: 0 9px;
    gap: 3px;
    border-bottom: 0;
    border-left: 0;
}
.top-tabs .active {
    height: 24px;
    padding: 0 11px 0 10px;
}
.dock-page {
    flex: 1;
    min-height: 0;
    display: flex;
    flex-direction: column;
    padding: 1px 1px 1px 2px;
    background: #fff;
    border: 1px solid #dcdcdc;
    border-left: 0;
}
.tree-frame {
    height: 391px;
    background: #fff;
    border: 1px solid #828790;
}
table {
    width: 100%;
    border-collapse: collapse;
    table-layout: fixed;
}
th {
    height: 22px;
    padding: 0 0 0 4px;
    font-weight: normal;
    text-align: left;
    border-right: 1px solid #e0e0e0;
}
th:last-child {
    border-right: 0;
}
td {
    height: 20px;
    padding: 0;
}
.tree th:nth-child(1) {
    width: 115px;
}
.tree th:nth-child(2) {
    width: 100px;
}
.root td {
    padding-left: 3px;
    height: 18px;
}
.node {
    display: flex;
    align-items: center;
    gap: 6px;
    padding-left: 4px;
}
.node.child {
    padding-left: 43px;
}
.node.off {
    color: #808080;
}
.fold {
    width: 10px;
    height: 10px;
    margin-right: 3px;
    fill: none;
    stroke: #333;
    stroke-width: 1.5;
}
.fold.shut {
    stroke: #a0a0a0;
}
.prop-frame {
    flex: 1;
    margin: 7px 4px 0 2px;
    border: 1px solid #828790;
}
.props th {
    height: 24px;
}
.props th:first-child {
    width: 100px;
}
.bottom-tabs {
    height: 22px;
    margin: 3px 0 0 2px;
    align-items: flex-start;
}
.bottom-tabs button {
    height: 19px;
    padding: 0 8px;
}
.bottom-tabs .active {
    height: 20px;
    padding: 0 12px;
    border-top: 0;
}

/* 3D view */
.mdi {
    flex: 1;
    min-width: 0;
    display: flex;
    flex-direction: column;
}
.viewport {
    position: relative;
    flex: 1;
    min-height: 0;
    background: #fff;
}
.scene {
    width: 100%;
    height: 100%;
}
.navcube {
    position: absolute;
    top: 0;
    right: 0;
    width: 160px;
    height: 148px;
}
.axes {
    position: absolute;
    right: 0;
    bottom: 23px;
    width: 80px;
    height: 70px;
}
.dim {
    font-size: 16px;
    fill: #b84448;
    text-anchor: middle;
}
.axis {
    font-size: 9px;
}
.face-label {
    font-family: Roboto, sans-serif;
    font-size: 12px;
    font-weight: bold;
    text-anchor: middle;
}
.mdi-tabs {
    display: flex;
    align-items: flex-start;
    height: 24px;
    font-family: Roboto, sans-serif;
    background: linear-gradient(#a0a0a0 1px, #f0f0f0 1px);
}
.mdi-tab {
    display: flex;
    align-items: center;
    gap: 3px;
    height: 22px;
    padding: 0 14px 0 10px;
    border: 1px solid #d9d9d9;
    border-top: 0;
    border-left: 0;
}
.mdi-tab.active {
    height: 24px;
    padding: 0 16px 0 12px;
    background: #fff;
}
.mdi-tab button {
    width: 15px;
    height: 14px;
    margin-left: 1px;
    background: #b8b8b8;
    border: 1px solid #909090;
    border-radius: 2px;
}
.mdi-tab.active button {
    background: #e07050;
    border-color: #b84020;
}
.mdi-tab button svg {
    width: 13px;
    height: 12px;
}

/* status bar */
.statusbar {
    display: flex;
    align-items: center;
    height: 33px;
    padding-top: 3px;
    font-family: Roboto, sans-serif;
}
.message {
    flex: 1;
    padding-left: 1px;
}
.navstyle {
    display: flex;
    align-items: center;
    gap: 4px;
    height: 28px;
    padding: 0 8px 0 24px;
    border-left: 1px solid #d0d0d0;
}
.navstyle svg {
    width: 12px;
    height: 16px;
}
.navstyle .tri {
    margin-left: 2px;
}
.size {
    padding: 4px 2px 4px 4px;
    border-left: 1px solid #d0d0d0;
}

/* taskbar */
.taskbar {
    display: flex;
    height: 40px;
    color: #fff;
    font-size: 14px;
    background: linear-gradient(90deg, #222428, #26282c 40%, #2c2620 60%, #322a22 78%, #242528 82%);
}
.start {
    width: 48px;
    display: flex;
    align-items: center;
    justify-content: center;
}
.start svg {
    width: 16px;
    height: 16px;
}
.search {
    display: flex;
    align-items: center;
    width: 288px;
    background: #f2f2f2;
    border: 1px solid #c0c0c0;
    border-bottom: 0;
    color: #444;
}
.lens {
    width: 18px;
    height: 18px;
    margin: 0 10px 0 11px;
    fill: none;
    stroke: #222;
    stroke-width: 1.5;
}
.search input {
    flex: 1;
    min-width: 0;
}
.search input::placeholder {
    color: #444;
}
.donkey {
    width: 80px;
    height: 40px;
}
.apps {
    display: flex;
    gap: 1px;
    padding-left: 3px;
}
.apps button {
    width: 48px;
    display: flex;
    align-items: center;
    justify-content: center;
}
.apps svg {
    width: 24px;
    height: 24px;
}
.running {
    background: linear-gradient(#76b9ed, #76b9ed) center bottom / 40px 2px no-repeat;
}
.running.current {
    background-color: #4c5056;
    background-size: 100% 2px;
}
.photos {
    background: linear-gradient(#ff7a00, #ff7a00) #ac6428 center bottom / 100% 2px no-repeat;
}
.tray {
    margin-left: auto;
    display: flex;
    align-items: center;
}
.tray button {
    display: flex;
    align-items: center;
    justify-content: center;
    width: 24px;
    height: 40px;
    font-size: 12px;
}
.tray svg {
    width: 16px;
    height: 16px;
    fill: none;
    stroke: #fff;
}
.tray .weather {
    width: auto;
    gap: 8px;
    margin-right: 18px;
    font-size: 14px;
}
.tray .weather svg {
    width: 24px;
    height: 24px;
    stroke: none;
}
.badge {
    font-size: 10px;
    fill: #fff;
    text-anchor: middle;
}
.tray .pen {
    margin-left: 3px;
}
.tray .lang {
    width: 34px;
    margin-left: 5px;
}
.tray .clock {
    width: 77px;
    flex-direction: column;
    line-height: 18px;
}
.tray .notify {
    width: 44px;
    margin-right: 4px;
    border-right: 1px solid #777;
    padding-right: 12px;
}
.tray .notify svg {
    stroke: none;
}
```
